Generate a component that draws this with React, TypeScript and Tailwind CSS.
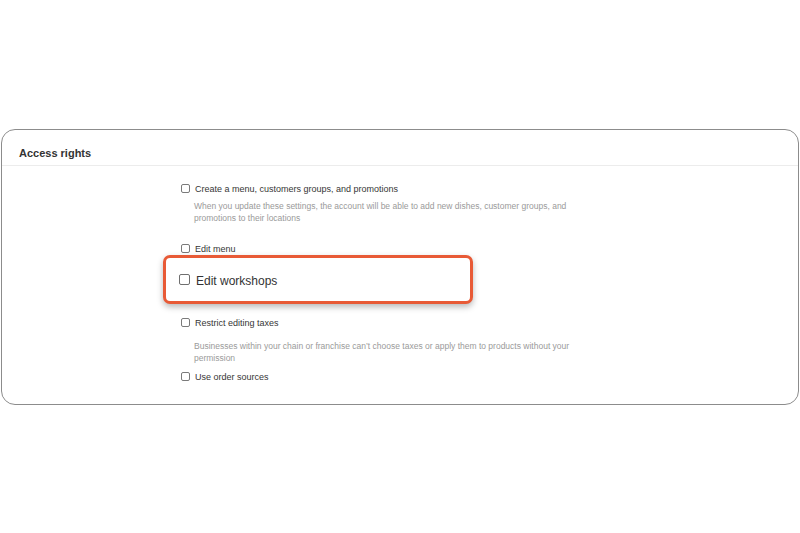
const Box = ({ big = false }: { big?: boolean }) => (
  <span
    className={
      big
        ? "inline-block w-[11px] h-[11px] shrink-0 rounded-[2px] border border-[#6f6f6f] bg-white"
        : "inline-block w-[9px] h-[9px] shrink-0 rounded-[2px] border border-[#7a7a7a] bg-white"
    }
  />
);

const Option = ({ label }: { label: string }) => (
  <label className="flex items-center gap-[5px] h-[14px] text-[9px] text-[#363636]">
    <Box />
    <span className="translate-y-[1.5px]">{label}</span>
  </label>
);

const Hint = ({ children }: { children: React.ReactNode }) => (
  <p className="pl-[13px] max-w-[410px] text-[8.5px] leading-[11.5px] text-[#9a9a9a]">
    {children}
  </p>
);

export default function App() {
  return (
    <div className="w-[800px] h-[533px] bg-white pt-[129px] px-[1px] font-['Liberation_Sans',Arial,sans-serif]">
      <div className="rounded-[14px] border border-[#8c8c8c] bg-white">
        <div className="h-[36px] flex items-end pb-[4px] px-[17px] border-b border-[#ececec]">
          <h2 className="text-[11px] font-bold text-[#333]">Access rights</h2>
        </div>

        <div className="flex flex-col pl-[179px] pt-[15px] pb-[21px]">
          <Option label="Create a menu, customers groups, and promotions" />
          <div className="mt-[6px]">
            <Hint>
              When you update these settings, the account will be able to add new dishes, customer
              groups, and promotions to their locations
            </Hint>
          </div>

          <div className="mt-[17px]">
            <Option label="Edit menu" />
          </div>

          <div className="-ml-[18px] w-[310px] h-[49px] flex items-center gap-[6px] pl-[13px] rounded-[7px] border-[3px] border-[#e85a36] bg-white shadow-[0_3px_6px_rgba(0,0,0,0.28)]">
            <Box big />
            <span className="text-[12px] text-[#333] translate-y-[1px]">Edit workshops</span>
          </div>

          <div className="mt-[11px]">
            <Option label="Restrict editing taxes" />
          </div>
          <div className="mt-[12px]">
            <Hint>
              Businesses within your chain or franchise can’t choose taxes or apply them to products
              without your permission
            </Hint>
          </div>

          <div className="mt-[5px]">
            <Option label="Use order sources" />
          </div>
        </div>
      </div>
    </div>
  );
}
